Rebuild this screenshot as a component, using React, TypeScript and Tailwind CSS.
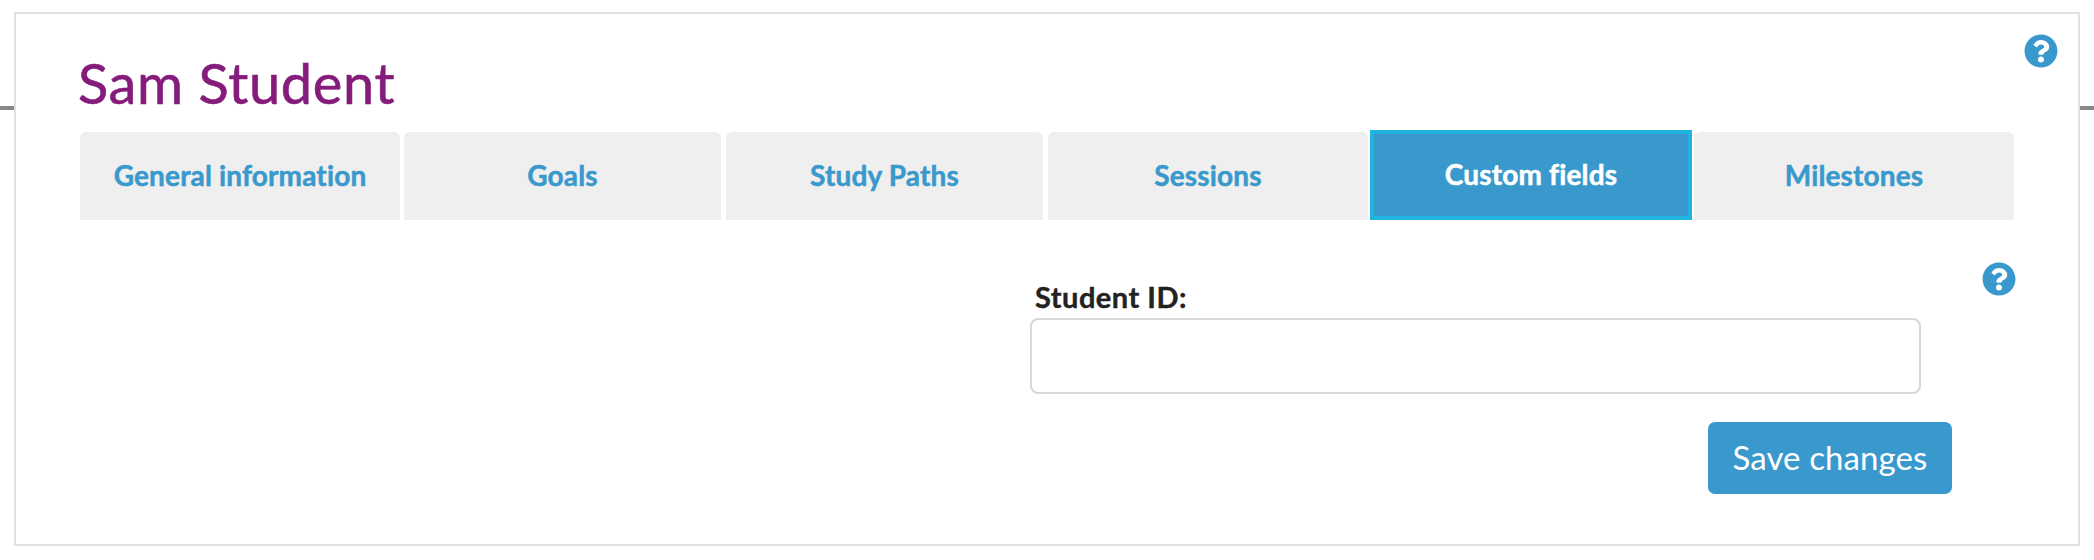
import { FaQuestionCircle } from "react-icons/fa";

const tabs = [
  { label: "General information", className: "w-[320px] mr-[4px]" },
  { label: "Goals", className: "w-[317px] mr-[5px]" },
  { label: "Study Paths", className: "w-[317px] mr-[5px]" },
  { label: "Sessions", className: "w-[320px] mr-[2px]" },
  { label: "Custom fields", className: "w-[322px] mr-[2px]", active: true },
  { label: "Milestones", className: "w-[320px]" },
];

function HelpIcon({ className }: { className?: string }) {
  return <FaQuestionCircle className={`w-[34px] h-[34px] text-[#3a99cc] shrink-0 ${className ?? ""}`} />;
}

export default function App() {
  return (
    <div className="flex items-start w-[2094px] h-[560px] bg-white pt-[12px] font-['Lato',sans-serif] overflow-hidden">
      <div className="w-[14px] h-[4px] mt-[94px] bg-[#888888]" />

      <div className="relative w-[2066px] h-[534px] border-2 border-[#e0e0e0] bg-white">
        <HelpIcon className="absolute top-[20px] right-[20px]" />

        <div className="pl-[64px] pt-[35px]">
          <h1 className="h-[68px] -ml-[2px] text-[56px] leading-[68px] tracking-[0.6px] [-webkit-text-stroke:0.6px_#851c7c] text-[#851c7c]">Sam Student</h1>

          <div className="flex items-end h-[90px] mt-[13px]">
            {tabs.map((tab) => (
              <div
                key={tab.label}
                className={
                  tab.active
                    ? `${tab.className} h-[90px] flex items-center justify-center pb-[2px] bg-[#3a99cc] border-4 border-[#1fb4e2] text-white text-[28px] font-bold tracking-[0.15px] [-webkit-text-stroke:0.5px_currentColor]`
                    : `${tab.className} h-[88px] flex items-center justify-center pb-[2px] bg-[#efefef] rounded-t-[6px] text-[#3a99cc] text-[28px] font-bold tracking-[0.15px] [-webkit-text-stroke:0.5px_currentColor]`
                }
              >
                {tab.label}
              </div>
            ))}
          </div>
        </div>

        <div className="flex items-start pl-[1014px]">
          <div className="w-[922px] pt-[56px]">
            <label className="block h-[42px] pl-[5px] text-[29px] leading-[42px] tracking-[0.5px] font-bold text-[#222222] [-webkit-text-stroke:0.4px_#222222]">Student ID:</label>
            <input className="block w-[891px] h-[76px] border-2 border-[#d8d8d8] rounded-[8px] bg-white" />
            <div className="flex justify-end mt-[28px]">
              <button className="w-[244px] h-[72px] rounded-[7px] bg-[#3a99cc] text-white text-[33px] tracking-[0.1px]">Save changes</button>
            </div>
          </div>
          <HelpIcon className="ml-[30px] mt-[42px]" />
        </div>
      </div>

      <div className="w-[14px] h-[4px] mt-[94px] bg-[#888888]" />
    </div>
  );
}
